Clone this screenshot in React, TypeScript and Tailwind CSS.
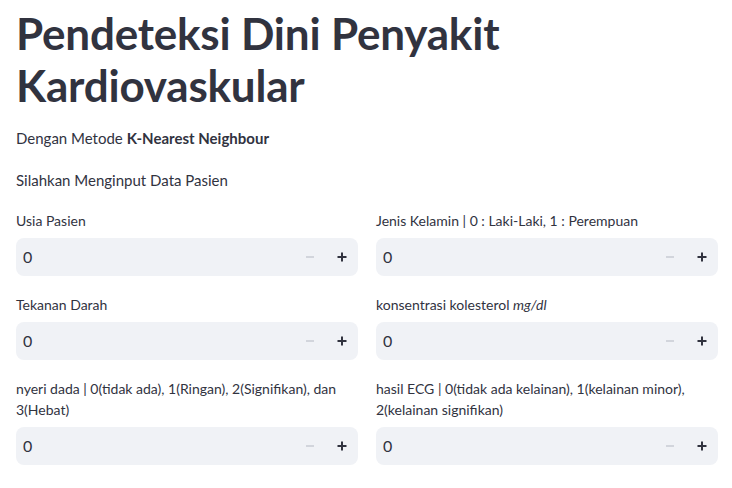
const fields: { label: React.ReactNode }[][] = [
  [{ label: "Usia Pasien" }, { label: "Jenis Kelamin | 0 : Laki-Laki, 1 : Perempuan" }],
  [
    { label: "Tekanan Darah" },
    {
      label: (
        <>
          konsentrasi kolesterol <em>mg/dl</em>
        </>
      ),
    },
  ],
  [
    { label: "nyeri dada | 0(tidak ada), 1(Ringan), 2(Signifikan), dan 3(Hebat)" },
    { label: "hasil ECG | 0(tidak ada kelainan), 1(kelainan minor), 2(kelainan signifikan)" },
  ],
];

function NumberInput({ label }: { label: React.ReactNode }) {
  return (
    <div className="flex flex-col">
      <label className="text-[14px] leading-[21px] text-[#31333f] pr-4">{label}</label>
      <div className="mt-[6.5px] flex h-[38px] items-center rounded-lg bg-[#f0f2f6]">
        <span className="flex-1 pl-[7px] text-[16px] text-[#31333f]">0</span>
        <button className="flex h-full w-8 items-center justify-center">
          <svg width="10" height="10" viewBox="0 0 10 10">
            <rect x="1" y="4" width="8" height="2" fill="#d2d5dc" />
          </svg>
        </button>
        <button className="flex h-full w-8 items-center justify-center">
          <svg width="10" height="10" viewBox="0 0 10 10">
            <rect x="0.5" y="4" width="9" height="2" fill="#31333f" />
            <rect x="4" y="0.5" width="2" height="9" fill="#31333f" />
          </svg>
        </button>
      </div>
    </div>
  );
}

export default function App() {
  return (
    <div
      className="min-h-screen bg-white pl-4 pr-[14px] text-[#31333f]"
      style={{ fontFamily: "Lato, 'Noto Sans', sans-serif" }}
    >
      <h1 className="pt-[7px] text-[44px] font-bold leading-[52px] tracking-[-0.2px]">
        Pendeteksi Dini Penyakit
        <br />
        Kardiovaskular
      </h1>
      <p className="mt-[15px] text-[15px] leading-6">
        Dengan Metode <strong>K-Nearest Neighbour</strong>
      </p>
      <p className="mt-[18px] text-[15px] leading-6">Silahkan Menginput Data Pasien</p>
      <div className="mt-[18px] flex flex-col gap-[18.5px]">
        {fields.map((row, i) => (
          <div key={i} className="grid grid-cols-2 gap-[18px]">
            {row.map((f, j) => (
              <NumberInput key={j} label={f.label} />
            ))}
          </div>
        ))}
      </div>
    </div>
  );
}
